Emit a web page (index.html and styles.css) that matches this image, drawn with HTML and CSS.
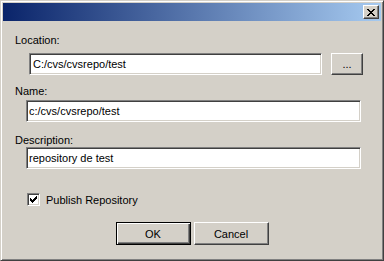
FILE: index.html
```html
<!DOCTYPE html>
<html lang="en">
<head>
  <meta charset="UTF-8" />
  <title>Repository</title>
  <link rel="stylesheet" href="styles.css">
</head>
<body>
  <div class="window">
    <div class="titlebar">
      <button class="close-btn" title="Close">
        <svg width="8" height="7" viewBox="0 0 8 7"><path d="M0 0h2v1h1v1h2V1h1V0h2v1H7v1H6v1H5v1h1v1h1v1h1v1H6V6H5V5H3v1H2v1H0V6h1V5h1V4h1V3H2V2H1V1H0z" fill="#000"/></svg>
      </button>
    </div>
    <div class="content">
      <label class="label label-first">Location:</label>
      <div class="location-row">
        <input class="field field-location" type="text" value="C:/cvs/cvsrepo/test" />
        <button class="btn btn-browse">...</button>
      </div>
      <label class="label label-name">Name:</label>
      <input class="field field-wide field-name" type="text" value="c:/cvs/cvsrepo/test" />
      <label class="label label-desc">Description:</label>
      <input class="field field-wide" type="text" value="repository de test" />
      <div class="check-row">
        <span class="checkbox">
          <svg width="7" height="7" viewBox="0 0 7 7"><path d="M0 2h1v1h1v1h1V3h1V2h1V1h1V0h1v3H6v1H5v1H4v1H3v1H2V6H1V5H0z" fill="#000"/></svg>
        </span>
        <span>Publish Repository</span>
      </div>
      <div class="actions">
        <button class="btn btn-default">OK</button>
        <button class="btn">Cancel</button>
      </div>
    </div>
  </div>
</body>
</html>
```

FILE: styles.css
```css
body {
  margin: 0;
  font-family: "Liberation Sans", Tahoma, sans-serif;
  font-size: 11px;
  color: #000;
  background: #d4d0c8;
}
.window {
  width: 384px;
  height: 261px;
  box-sizing: border-box;
  background: #d4d0c8;
  border: 1px solid;
  border-color: #d4d0c8 #404040 #404040 #d4d0c8;
  box-shadow: inset 1px 1px #fff, inset -1px -1px #808080;
  padding: 2px;
}
.titlebar {
  height: 18px;
  background: linear-gradient(to right, #0a246a, #a6caf0);
  display: flex;
  justify-content: flex-end;
  align-items: center;
  padding-right: 2px;
}
.close-btn {
  width: 16px;
  height: 14px;
  padding: 0;
  box-sizing: border-box;
  background: #d4d0c8;
  border: 1px solid;
  border-color: #fff #404040 #404040 #fff;
  box-shadow: inset -1px -1px #808080;
  display: flex;
  align-items: center;
  justify-content: center;
}
.content {
  display: flex;
  flex-direction: column;
  align-items: flex-start;
  padding: 13px 0 0 12px;
}
.label {
  line-height: 13px;
}
.label-name {
  margin-top: 10px;
}
.label-desc {
  margin-top: 12px;
}
.location-row {
  display: flex;
  gap: 9px;
  margin: 6px 0 0 14px;
}
.field {
  height: 22px;
  box-sizing: border-box;
  border: 1px solid;
  border-color: #808080 #fff #fff #808080;
  box-shadow: inset 1px 1px #404040, inset -1px -1px #d4d0c8;
  background: #fff;
  padding: 0 2px 0 3px;
  margin: 0;
  font-family: inherit;
  font-size: 11px;
  color: #000;
  outline: none;
}
.field-location {
  width: 293px;
}
.field-wide {
  width: 335px;
  margin-left: 11px;
  padding-left: 2px;
}
.field-name {
  margin-top: 2px;
}
.btn {
  width: 75px;
  height: 23px;
  box-sizing: border-box;
  background: #d4d0c8;
  border: 1px solid;
  border-color: #fff #404040 #404040 #fff;
  box-shadow: inset -1px -1px #808080;
  font-family: inherit;
  font-size: 11px;
  color: #000;
  padding: 0;
}
.btn-browse {
  width: 32px;
  height: 22px;
}
.btn-default {
  border-color: #000;
  box-shadow: inset 1px 1px #fff, inset -1px -1px #404040, inset -2px -2px #808080;
}
.check-row {
  display: flex;
  align-items: center;
  gap: 6px;
  margin: 24px 0 0 12px;
  height: 13px;
}
.checkbox {
  width: 13px;
  height: 13px;
  box-sizing: border-box;
  border: 1px solid;
  border-color: #808080 #fff #fff #808080;
  box-shadow: inset 1px 1px #404040, inset -1px -1px #d4d0c8;
  background: #fff;
  display: flex;
  align-items: center;
  justify-content: center;
}
.actions {
  align-self: center;
  display: flex;
  gap: 3px;
  margin-top: 16px;
  margin-left: -12px;
}
```
